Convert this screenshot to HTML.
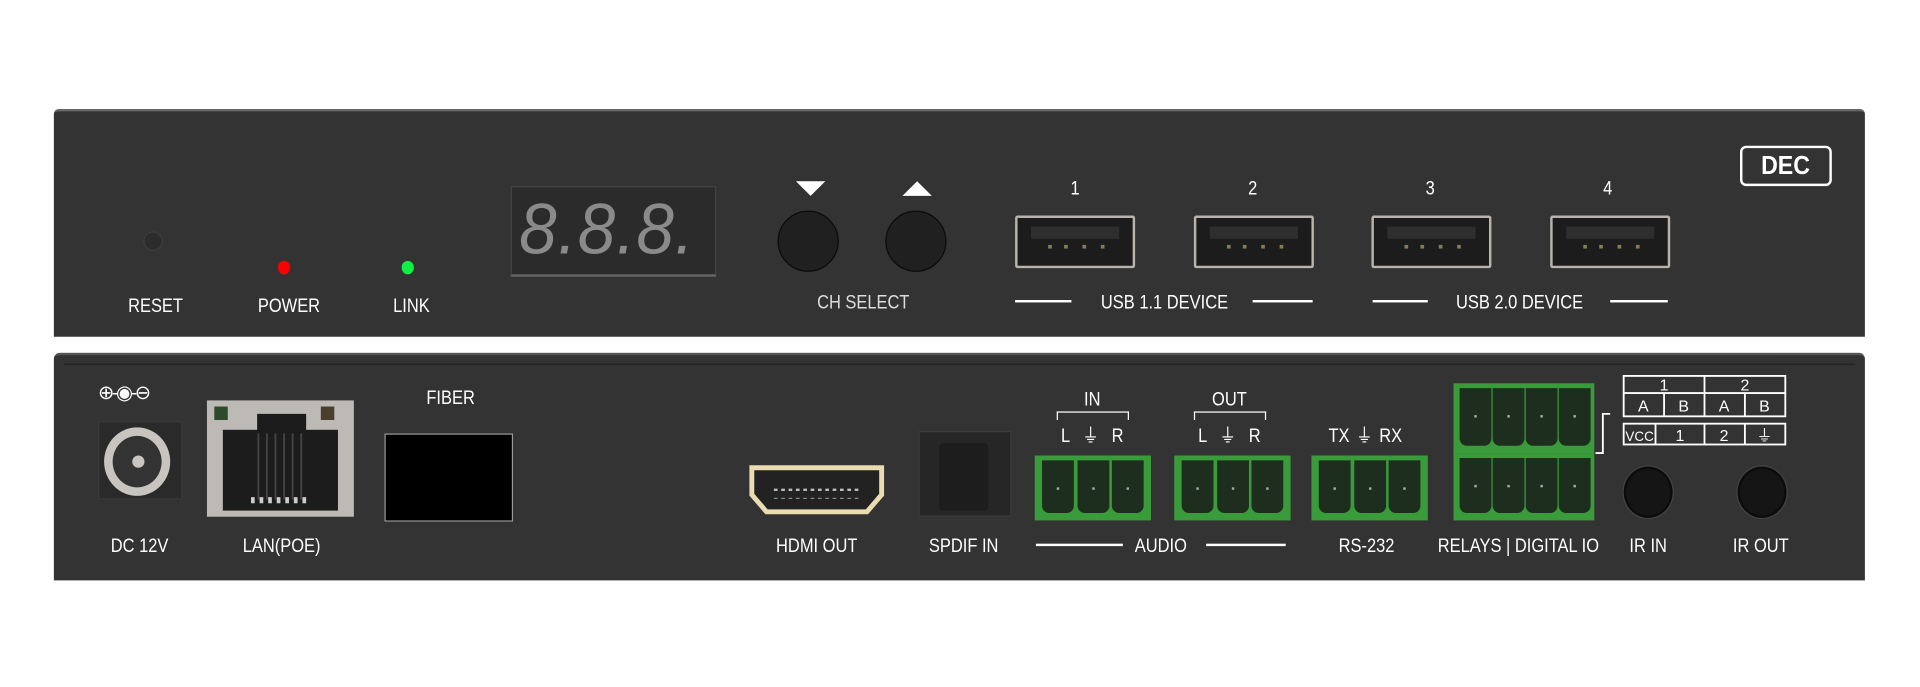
<!DOCTYPE html>
<html><head><meta charset="utf-8"><style>
html,body{margin:0;padding:0;background:#fff;width:1920px;height:687px;overflow:hidden}
#w{position:absolute;left:0;top:0;width:1568px;height:561px;transform:scale(1.22449);transform-origin:0 0;font-family:"Liberation Sans",sans-serif;color:#fff}
.a{position:absolute}
.t{position:absolute;transform:translateX(-50%) scaleX(.84);white-space:nowrap;font-size:16px;line-height:16px}
.panel{position:absolute;left:44px;width:1479px;background:#333;border-radius:4px 4px 0 0}
.usb{position:absolute;width:94px;height:39px;border:2px solid #b8b4ad;border-radius:2px;background:#1c1c1c}
.usb i{position:absolute;left:11px;top:7px;width:72px;height:10px;background:#2e2e2e}
.usb b{position:absolute;width:3px;height:3px;background:#8a7a50;top:22px}
.ln{position:absolute;height:2px;background:#fff}
.gb{position:absolute;background:#3a9b3a;height:53px}
.gb i{position:absolute;top:4px;bottom:6px;width:26px;background:#1e2e1e;border-radius:0 0 6px 6px}
.gb i::after{content:"";position:absolute;left:12px;top:22px;width:2px;height:2px;background:#aaa}
</style></head><body><div id="w">
<div class="panel" style="top:89px;height:184px;border-top:2px solid #666"></div>
<div class="a" style="left:117px;top:189px;width:14px;height:14px;border-radius:50%;background:#2c2c2c;border:1px solid #3d3d3d"></div>
<div class="a" style="left:227px;top:213px;width:10px;height:11px;border-radius:50%;background:#f00"></div>
<div class="a" style="left:328px;top:213px;width:10px;height:11px;border-radius:50%;background:#1e4"></div>
<div class="t" style="left:127px;top:243px">RESET</div>
<div class="t" style="left:236px;top:243px">POWER</div>
<div class="t" style="left:336px;top:243px">LINK</div>
<div class="a" style="left:417px;top:152px;width:166px;height:71px;background:#2b2b2b;border:1px solid #444;border-bottom:2px solid #666"></div>
<div class="a" style="left:424px;top:148px;font-size:58px;line-height:80px;color:#8a8a8a;letter-spacing:1px;font-style:italic;font-family:'Liberation Sans',sans-serif;transform:scaleX(.95);transform-origin:0 0">8.8.8.</div>
<svg class="a" style="left:650px;top:147px" width="24" height="14"><polygon points="0,1 24,1 12,13" fill="#fff"/></svg>
<svg class="a" style="left:737px;top:147px" width="24" height="14"><polygon points="0,13 24,13 12,1" fill="#fff"/></svg>
<div class="a" style="left:635px;top:172px;width:48px;height:48px;border-radius:50%;background:#202020;border:1px solid #0a0a0a"></div>
<div class="a" style="left:723px;top:172px;width:48px;height:48px;border-radius:50%;background:#202020;border:1px solid #0a0a0a"></div>
<div class="t" style="left:705px;top:240px;color:#ddd">CH SELECT</div>
<div class="t" style="left:878px;top:147px">1</div><div class="t" style="left:1023px;top:147px">2</div>
<div class="t" style="left:1168px;top:147px">3</div><div class="t" style="left:1313px;top:147px">4</div>
<div class="usb" style="left:829px;top:176px"><i></i><b style="left:25px"></b><b style="left:38px"></b><b style="left:53px"></b><b style="left:68px"></b></div>
<div class="usb" style="left:975px;top:176px"><i></i><b style="left:25px"></b><b style="left:38px"></b><b style="left:53px"></b><b style="left:68px"></b></div>
<div class="usb" style="left:1120px;top:176px"><i></i><b style="left:25px"></b><b style="left:38px"></b><b style="left:53px"></b><b style="left:68px"></b></div>
<div class="usb" style="left:1266px;top:176px"><i></i><b style="left:25px"></b><b style="left:38px"></b><b style="left:53px"></b><b style="left:68px"></b></div>
<div class="ln" style="left:829px;top:245px;width:46px"></div><div class="ln" style="left:1023px;top:245px;width:49px"></div>
<div class="t" style="left:951px;top:240px">USB 1.1 DEVICE</div>
<div class="ln" style="left:1121px;top:245px;width:45px"></div><div class="ln" style="left:1315px;top:245px;width:47px"></div>
<div class="t" style="left:1241px;top:240px">USB 2.0 DEVICE</div>
<div class="a" style="left:1421px;top:119px;width:71px;height:29px;border:2px solid #fff;border-radius:5px;font-weight:bold;font-size:21px;line-height:29px;text-align:center"><span style="display:inline-block;transform:scaleX(.9)">DEC</span></div>
<div class="panel" style="top:288px;height:184px;border-top:2px solid #555;border-radius:5px 5px 0 0"></div>
<div class="a" style="left:52px;top:297px;width:1463px;height:1px;background:#222"></div>
<div class="a" style="left:80px;top:313px;font-size:16px;line-height:18px;letter-spacing:-2px">⊕-◉-⊖</div>
<div class="a" style="left:80px;top:344px;width:67px;height:62px;background:#2a2a2a;border:1px solid #3a3a3a"></div>
<div class="a" style="left:85px;top:349px;width:40px;height:42px;border-radius:50%;border:7px solid #c8c5c0;background:#333"></div>
<div class="a" style="left:108px;top:372px;width:10px;height:10px;border-radius:50%;background:#c8c5c0"></div>
<div class="t" style="left:114px;top:439px">DC 12V</div>
<div class="a" style="left:169px;top:327px;width:120px;height:95px;background:#bdbab5"></div>
<div class="a" style="left:175px;top:332px;width:11px;height:11px;background:#2d4a2d"></div>
<div class="a" style="left:262px;top:332px;width:11px;height:11px;background:#4a3f2d"></div>
<div class="a" style="left:182px;top:351px;width:94px;height:66px;background:#1c1c1c"></div>
<div class="a" style="left:210px;top:338px;width:40px;height:14px;background:#1c1c1c"></div>
<svg class="a" style="left:195px;top:350px" width="70" height="65"><g stroke="#444" stroke-width="1.5"><path d="M16 4V58M23 4V58M30 4V58M37 4V58M44 4V58M51 4V58"/></g><g fill="#ccc"><rect x="10" y="56" width="3" height="5"/><rect x="17" y="56" width="3" height="5"/><rect x="24" y="56" width="3" height="5"/><rect x="31" y="56" width="3" height="5"/><rect x="38" y="56" width="3" height="5"/><rect x="45" y="56" width="3" height="5"/><rect x="52" y="56" width="3" height="5"/></g></svg>
<div class="t" style="left:230px;top:439px">LAN(POE)</div>
<div class="t" style="left:368px;top:318px">FIBER</div>
<div class="a" style="left:314px;top:354px;width:103px;height:70px;background:#000;border:1px solid #999"></div>
<svg class="a" style="left:610px;top:378px" width="115" height="45"><path d="M4 4H110V26L98 40H16L4 26Z" fill="#222" stroke="#e8dcb0" stroke-width="4"/><path d="M22 22H92" stroke="#bbb" stroke-width="2" stroke-dasharray="3 3"/><path d="M22 29H92" stroke="#888" stroke-width="1" stroke-dasharray="3 3"/></svg>
<div class="t" style="left:667px;top:439px">HDMI OUT</div>
<div class="a" style="left:750px;top:352px;width:74px;height:68px;background:#262626;border:1px solid #3c3c3c"></div>
<div class="a" style="left:767px;top:362px;width:40px;height:55px;background:#1d1d1d;border-radius:3px"></div>
<div class="t" style="left:787px;top:439px">SPDIF IN</div>
<div class="t" style="left:892px;top:319px">IN</div>
<div class="a" style="left:863px;top:336px;width:57px;height:6px;border:1.5px solid #fff;border-bottom:none"></div>
<div class="t" style="left:892px;top:349px;word-spacing:8px">L ⏚ R</div>
<div class="t" style="left:1004px;top:319px">OUT</div>
<div class="a" style="left:975px;top:336px;width:57px;height:6px;border:1.5px solid #fff;border-bottom:none"></div>
<div class="t" style="left:1004px;top:349px;word-spacing:8px">L ⏚ R</div>
<div class="t" style="left:1115px;top:349px;word-spacing:2px">TX ⏚ RX</div>
<div class="gb" style="left:845px;top:372px;width:95px"><i style="left:6px"></i><i style="left:35px"></i><i style="left:63px"></i></div>
<div class="gb" style="left:959px;top:372px;width:95px"><i style="left:6px"></i><i style="left:35px"></i><i style="left:63px"></i></div>
<div class="gb" style="left:1071px;top:372px;width:95px"><i style="left:6px"></i><i style="left:35px"></i><i style="left:63px"></i></div>
<div class="gb" style="left:1187px;top:313px;width:115px;height:57px"><i style="left:5px"></i><i style="left:32px"></i><i style="left:59px"></i><i style="left:86px"></i></div>
<div class="gb" style="left:1187px;top:370px;width:115px;height:55px"><i style="left:5px"></i><i style="left:32px"></i><i style="left:59px"></i><i style="left:86px"></i></div>
<div class="ln" style="left:846px;top:444px;width:71px"></div><div class="ln" style="left:985px;top:444px;width:65px"></div>
<div class="t" style="left:948px;top:439px">AUDIO</div>
<div class="t" style="left:1116px;top:439px">RS-232</div>
<div class="t" style="left:1240px;top:439px">RELAYS | DIGITAL IO</div>
<div class="t" style="left:1346px;top:439px">IR IN</div>
<div class="t" style="left:1438px;top:439px">IR OUT</div>
<svg class="a" style="left:1300px;top:304px" width="165" height="72" font-family="Liberation Sans,sans-serif" font-size="13" fill="#fff" text-anchor="middle">
<g stroke="#fff" stroke-width="1.5" fill="none">
<rect x="26" y="3" width="132" height="33"/><line x1="26" y1="17" x2="158" y2="17"/><line x1="92" y1="3" x2="92" y2="36"/><line x1="59" y1="17" x2="59" y2="36"/><line x1="125" y1="17" x2="125" y2="36"/>
<rect x="26" y="42" width="132" height="17"/><line x1="52" y1="42" x2="52" y2="59"/><line x1="92" y1="42" x2="92" y2="59"/><line x1="125" y1="42" x2="125" y2="59"/>
<path d="M15 34H9V66H3"/></g>
<text x="59" y="15" stroke="none">1</text><text x="125" y="15" stroke="none">2</text>
<text x="42" y="32">A</text><text x="75" y="32">B</text><text x="108" y="32">A</text><text x="141" y="32">B</text>
<text x="39" y="56" font-size="11">VCC</text><text x="72" y="56">1</text><text x="108" y="56">2</text><text x="141" y="56">⏚</text>
</svg>
<div class="a" style="left:1326px;top:381px;width:36px;height:38px;border-radius:50%;background:#151515;border:2px solid #0c0c0c;box-shadow:0 0 0 1px #444"></div>
<div class="a" style="left:1419px;top:381px;width:36px;height:38px;border-radius:50%;background:#151515;border:2px solid #0c0c0c;box-shadow:0 0 0 1px #444"></div>
</div></body></html>
